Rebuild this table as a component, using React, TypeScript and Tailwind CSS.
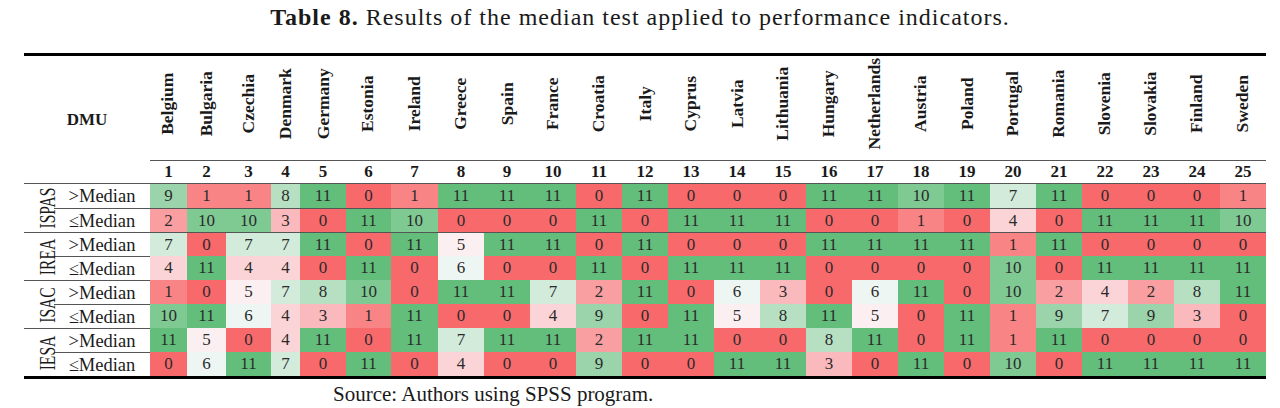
const COUNTRIES = [
  'Belgium', 'Bulgaria', 'Czechia', 'Denmark', 'Germany', 'Estonia', 'Ireland', 'Greece', 'Spain',
  'France', 'Croatia', 'Italy', 'Cyprus', 'Latvia', 'Lithuania', 'Hungary', 'Netherlands', 'Austria',
  'Poland', 'Portugal', 'Romania', 'Slovenia', 'Slovakia', 'Finland', 'Sweden',
];

// 0 = red, 5.5 = white, 11 = green (Excel 3-colour scale)
const SCALE: Record<number, string> = {
  0: 'bg-[#f8696b]',
  1: 'bg-[#f98486]',
  2: 'bg-[#f99ea1]',
  3: 'bg-[#fab9bc]',
  4: 'bg-[#fbd4d7]',
  5: 'bg-[#fceff1]',
  6: 'bg-[#eef6f3]',
  7: 'bg-[#d2ebdb]',
  8: 'bg-[#b7e0c3]',
  9: 'bg-[#9bd4ab]',
  10: 'bg-[#7fc993]',
  11: 'bg-[#63be7b]',
};

const GROUPS = [
  {
    name: 'ISPAS',
    above: [9, 1, 1, 8, 11, 0, 1, 11, 11, 11, 0, 11, 0, 0, 0, 11, 11, 10, 11, 7, 11, 0, 0, 0, 1],
    below: [2, 10, 10, 3, 0, 11, 10, 0, 0, 0, 11, 0, 11, 11, 11, 0, 0, 1, 0, 4, 0, 11, 11, 11, 10],
  },
  {
    name: 'IREA',
    above: [7, 0, 7, 7, 11, 0, 11, 5, 11, 11, 0, 11, 0, 0, 0, 11, 11, 11, 11, 1, 11, 0, 0, 0, 0],
    below: [4, 11, 4, 4, 0, 11, 0, 6, 0, 0, 11, 0, 11, 11, 11, 0, 0, 0, 0, 10, 0, 11, 11, 11, 11],
  },
  {
    name: 'ISAC',
    above: [1, 0, 5, 7, 8, 10, 0, 11, 11, 7, 2, 11, 0, 6, 3, 0, 6, 11, 0, 10, 2, 4, 2, 8, 11],
    below: [10, 11, 6, 4, 3, 1, 11, 0, 0, 4, 9, 0, 11, 5, 8, 11, 5, 0, 11, 1, 9, 7, 9, 3, 0],
  },
  {
    name: 'IESA',
    above: [11, 5, 0, 4, 11, 0, 11, 7, 11, 11, 2, 11, 11, 0, 0, 8, 11, 0, 11, 1, 11, 0, 0, 0, 0],
    below: [0, 6, 11, 7, 0, 11, 0, 4, 0, 0, 9, 0, 0, 11, 11, 3, 0, 11, 0, 10, 0, 11, 11, 11, 11],
  },
];

function DataRow({
  values,
  label,
  labelRuled,
  cellsRuled,
}: {
  values: number[];
  label: string;
  labelRuled: boolean;
  cellsRuled: boolean;
}) {
  return (
    <>
      <div className={`h-[24px] leading-[24px] text-center text-[18.5px] ${labelRuled ? 'border-t border-[#555]' : ''}`}>
        {label}
      </div>
      {values.map((v, i) => (
        <div
          key={i}
          className={`h-[24px] leading-[24px] text-center text-[17px] text-[#2b2b2b] ${SCALE[v]} ${
            cellsRuled ? 'border-t border-[#555]' : ''
          }`}
        >
          {v}
        </div>
      ))}
    </>
  );
}

export default function App() {
  return (
    <div className="w-[1280px] h-[408px] bg-white text-[#1a1a1a] font-['Liberation_Serif',serif]">
      <div className="h-[53px] pt-[4px] text-center text-[24px] leading-[26px] tracking-[1px]">
        <span className="font-bold">Table 8.</span> Results of the median test applied to performance indicators.
      </div>

      <div className="ml-[24px] w-fit border-y-[3px] border-black">
        <div className="grid grid-cols-[30px_96px_37px_39px_45px_29px_46px_45px_47px_repeat(18,46px)]">
          {/* header */}
          <div className="col-span-2 row-span-2 flex items-center justify-center border-b border-[#555] text-[17px] font-bold">
            DMU
          </div>
          {COUNTRIES.map((c) => (
            <div key={c} className="h-[105px] pb-[8px] flex items-center justify-center border-b border-[#555]">
              <span className="-rotate-90 whitespace-nowrap text-[17.5px] font-bold leading-none">{c}</span>
            </div>
          ))}
          {COUNTRIES.map((c, i) => (
            <div key={c} className="h-[23px] leading-[22px] text-center text-[17px] font-bold border-b border-[#555]">
              {i + 1}
            </div>
          ))}

          {/* body */}
          {GROUPS.map((g, gi) => (
            <div key={g.name} className="contents">
              <div className={`row-span-2 flex items-center justify-center ${gi > 0 ? 'border-t border-[#555]' : ''}`}>
                <span className="-rotate-90 scale-x-[0.65] translate-x-[8px] whitespace-nowrap text-[24px] leading-none">
                  {g.name}
                </span>
              </div>
              <DataRow values={g.above} label=">Median" labelRuled={gi > 0} cellsRuled={gi === 1} />
              <DataRow values={g.below} label="≤Median" labelRuled cellsRuled={gi === 0} />
            </div>
          ))}
        </div>
      </div>

      <div className="ml-[333px] pt-[3px] text-[21px] leading-[24px]">Source: Authors using SPSS program.</div>
    </div>
  );
}
